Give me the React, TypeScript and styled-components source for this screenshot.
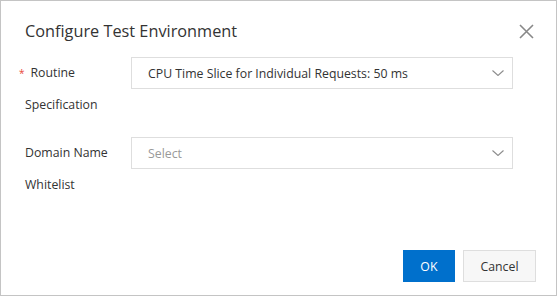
import { FC } from "react";
import styled, { createGlobalStyle } from "styled-components";

const GlobalStyle = createGlobalStyle`
    body {
        margin: 0;
        background: #fff;
        font-family: "Open Sans", "Noto Sans", sans-serif;
        color: #333;
    }
`;

const Dialog = styled.div`
    box-sizing: border-box;
    width: 557px;
    height: 296px;
    border: 1px solid #c4c4c4;
    background: #fff;
    display: flex;
    flex-direction: column;
`;

const Header = styled.header`
    display: flex;
    align-items: center;
    justify-content: space-between;
    padding: 17px 22px 0 24px;
    height: 26px;
`;

const Title = styled.h1`
    margin: 0;
    font-size: 16.3px;
    font-weight: 400;
    line-height: 26px;
    color: #333;
`;

const CloseButton = styled.button`
    width: 16px;
    height: 16px;
    padding: 0;
    border: 0;
    background: none;
    display: flex;
    align-items: center;
    justify-content: center;
    cursor: pointer;
`;

const Form = styled.div`
    display: flex;
    flex-direction: column;
    gap: 16px;
    padding: 13px 0 0 24px;
`;

const Row = styled.div`
    display: grid;
    grid-template-columns: 106px 382px;
`;

const Label = styled.label<{ $required?: boolean }>`
    font-size: 12.3px;
    line-height: 32px;
    color: #333;
    padding-right: 8px;
    text-indent: ${(p) => (p.$required ? "-6px" : "0")};
`;

const Star = styled.span`
    color: #e84738;
    font-size: 10px;
    margin-right: 6px;
`;

const Select = styled.div<{ $placeholder?: boolean }>`
    box-sizing: border-box;
    height: 32px;
    border: 1px solid #dedede;
    display: flex;
    align-items: center;
    justify-content: space-between;
    padding: 0 8px 0 16px;
    font-size: 12.3px;
    color: ${(p) => (p.$placeholder ? "#999" : "#333")};
`;

const Footer = styled.footer`
    margin-top: auto;
    display: flex;
    justify-content: flex-end;
    gap: 8px;
    padding: 0 20px 13px;
`;

const Button = styled.button<{ $primary?: boolean }>`
    box-sizing: border-box;
    height: 32px;
    padding: 0 16.5px;
    font-family: inherit;
    font-size: 12.3px;
    border: 1px solid ${(p) => (p.$primary ? "#0070cc" : "#dedede")};
    background: ${(p) => (p.$primary ? "#0070cc" : "#f7f7f7")};
    color: ${(p) => (p.$primary ? "#fff" : "#333")};
    cursor: pointer;
`;

const Chevron: FC = () => (
    <svg width="12" height="6" viewBox="0 0 12 6" fill="none">
        <path d="M0.5 0.5l5.5 5 5.5-5" stroke="#8c8c8c" strokeWidth="1.1" />
    </svg>
);

const CloseIcon: FC = () => (
    <svg width="15" height="15" viewBox="0 0 15 15" fill="none">
        <path d="M1 1l13 13M14 1L1 14" stroke="#888" strokeWidth="1.6" />
    </svg>
);

export default function App() {
    return (
        <>
            <GlobalStyle />
            <Dialog>
                <Header>
                    <Title>Configure Test Environment</Title>
                    <CloseButton aria-label="Close">
                        <CloseIcon />
                    </CloseButton>
                </Header>
                <Form>
                    <Row>
                        <Label $required>
                            <Star>*</Star>Routine Specification
                        </Label>
                        <Select>
                            <span>CPU Time Slice for Individual Requests: 50 ms</span>
                            <Chevron />
                        </Select>
                    </Row>
                    <Row>
                        <Label>Domain Name Whitelist</Label>
                        <Select $placeholder>
                            <span>Select</span>
                            <Chevron />
                        </Select>
                    </Row>
                </Form>
                <Footer>
                    <Button $primary>OK</Button>
                    <Button>Cancel</Button>
                </Footer>
            </Dialog>
        </>
    );
}
